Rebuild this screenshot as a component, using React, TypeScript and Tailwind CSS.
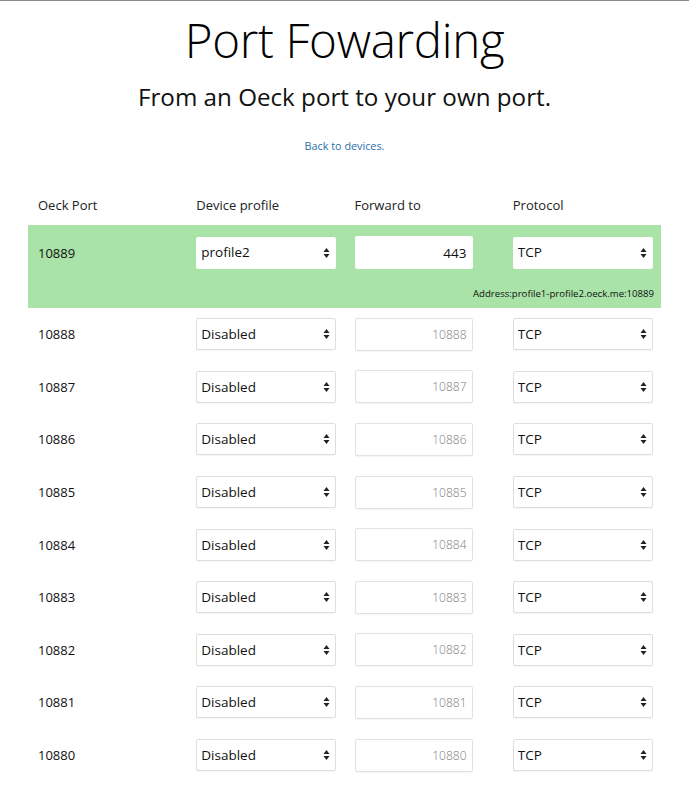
import { useState } from 'react';

type Row = { port: number; profile: string; forward: string; protocol: string };

const ports = [10889, 10888, 10887, 10886, 10885, 10884, 10883, 10882, 10881, 10880];

const initialRows: Row[] = ports.map((p) => ({
  port: p,
  profile: p === 10889 ? 'profile2' : 'Disabled',
  forward: p === 10889 ? '443' : '',
  protocol: 'TCP',
}));

function SortArrows() {
  return (
    <svg
      className="pointer-events-none absolute right-[6px] top-1/2 -translate-y-1/2"
      width="7"
      height="11"
      viewBox="0 0 7 11"
    >
      <path d="M3.5 0.5 L6.5 4.5 L0.5 4.5 Z" fill="#222" />
      <path d="M3.5 10.5 L6.5 6.5 L0.5 6.5 Z" fill="#222" />
    </svg>
  );
}

function Select({
  value,
  options,
  onChange,
  active,
}: {
  value: string;
  options: string[];
  onChange: (v: string) => void;
  active?: boolean;
}) {
  return (
    <div className="relative h-[32px] w-[140px]">
      <select
        value={value}
        onChange={(e) => onChange(e.target.value)}
        className={
          active
            ? 'h-full w-full appearance-none rounded-[2px] bg-white pl-[5px] pr-5 text-[13.5px] text-[#111] outline-none'
            : 'h-full w-full appearance-none rounded-[2px] border border-[#dedede] bg-white pl-[4px] pr-5 text-[13.5px] text-[#111] shadow-[0_1px_1px_rgba(0,0,0,0.04)] outline-none'
        }
      >
        {options.map((o) => (
          <option key={o}>{o}</option>
        ))}
      </select>
      <SortArrows />
    </div>
  );
}

export default function App() {
  const [rows, setRows] = useState(initialRows);

  const update = (i: number, patch: Partial<Row>) =>
    setRows((rs) => rs.map((r, j) => (j === i ? { ...r, ...patch } : r)));

  return (
    <div className="min-h-[800px] border-t border-[#8a8a8a] bg-white font-['Open_Sans',sans-serif] text-[#111]">
      <h1 className="pt-[10px] text-center text-[47.5px] font-light leading-[58px] tracking-[-0.3px] text-black">
        Port Fowarding
      </h1>
      <p className="mt-[12px] text-center text-[24.2px] font-normal leading-[32px] text-[#111]">
        From an Oeck port to your own port.
      </p>
      <div className="mt-[23px] text-center leading-[16px]">
        <a href="#" className="text-[10.8px] text-[#2a6fa8]">
          Back to devices.
        </a>
      </div>

      <div className="mx-auto mt-[26px] w-[633px]">
        <div className="grid grid-cols-4 pb-[10px] pt-[15px] text-[13px] leading-[20px] text-[#222]">
          <div className="pl-[10px]">Oeck Port</div>
          <div className="pl-[10px]">Device profile</div>
          <div className="pl-[10px]">Forward to</div>
          <div className="pl-[10px]">Protocol</div>
        </div>

        {rows.map((r, i) => {
          const active = r.profile !== 'Disabled';
          return (
            <div key={r.port} className={active ? 'bg-[#a9e3a7] pb-[6px] pt-[11px]' : 'flex h-[52.6px] items-center'}>
              <div className="grid w-full grid-cols-4 items-center">
                <div className="pl-[10px] text-[13px] leading-[20px] text-[#111]">{r.port}</div>
                <div className="pl-[10px]">
                  <Select
                    value={r.profile}
                    options={['Disabled', 'profile1', 'profile2']}
                    onChange={(v) => update(i, { profile: v })}
                    active={active}
                  />
                </div>
                <div className="pl-[10px]">
                  <input
                    value={r.forward}
                    placeholder={String(r.port)}
                    onChange={(e) => update(i, { forward: e.target.value })}
                    className={
                      active
                        ? 'h-[33px] w-[118px] rounded-[2px] bg-white pr-[6px] text-right text-[13.5px] text-[#111] outline-none'
                        : 'h-[33px] w-[118px] rounded-[2px] border border-[#e2e2e2] bg-white pr-[5px] text-right text-[12px] text-[#111] shadow-[0_1px_1px_rgba(0,0,0,0.04)] outline-none placeholder:font-light placeholder:text-[#7d7d7d]'
                    }
                  />
                </div>
                <div className="pl-[10px]">
                  <Select
                    value={r.protocol}
                    options={['TCP', 'UDP']}
                    onChange={(v) => update(i, { protocol: v })}
                    active={active}
                  />
                </div>
              </div>
              {active ? (
                <div className="mt-[17px] pr-[7px] text-right text-[9.6px] leading-[16px] text-[#111]">
                  Address:{r.profile === 'profile2' ? 'profile1-profile2' : r.profile}.oeck.me:{r.port}
                </div>
              ) : null}
            </div>
          );
        })}
      </div>
    </div>
  );
}
